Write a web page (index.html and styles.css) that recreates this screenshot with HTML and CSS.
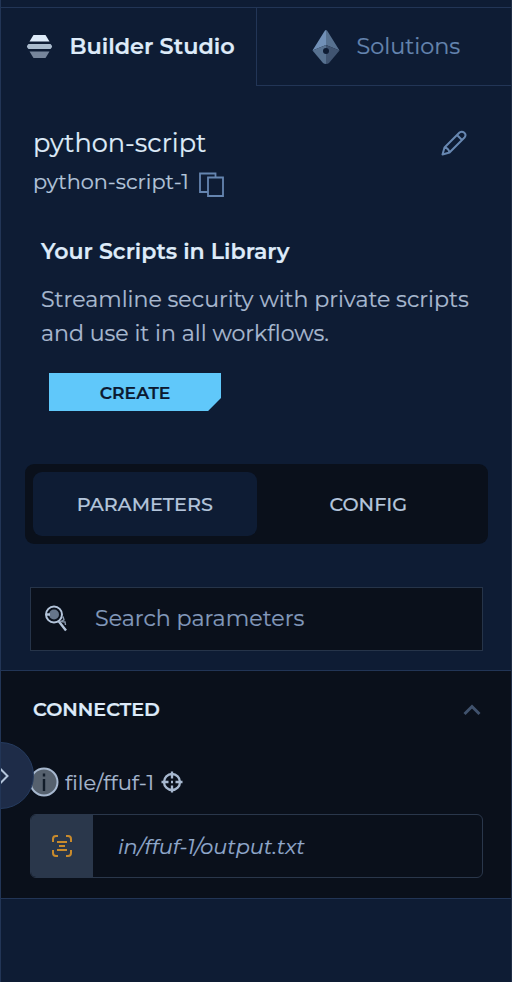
FILE: index.html
```html
<!DOCTYPE html>
<html lang="en">
<head>
<meta charset="utf-8">
<title>Builder Studio</title>
<link rel="stylesheet" href="styles.css">
</head>
<body>
<main class="panel">
  <nav class="tabs">
    <div class="tab tab-active">
      <svg width="28" height="26" viewBox="0 0 28 26"><path d="M7.500 1h12l4 6.500h-20z" fill="#deebf9"/><path d="M2.500 10h22q3 2.500 0 5h-22q-3-2.500 0-5z" fill="#aabbcd"/><path d="M3.500 17.500h20l-4 6.500h-12z" fill="#76859b"/></svg>
      <span class="t-builder">Builder Studio</span>
    </div>
    <div class="tab tab-idle">
      <svg width="28" height="36" viewBox="0 0 28 36"><path d="M14 1q-1 0-2 2L.500 21.500 14 16z" fill="#7190b7"/><path d="M14 1q1 0 2 2l11.500 18.500L14 16z" fill="#577190"/><path d="M.500 21.500 14 16v19q-2 0-3-1z" fill="#577190"/><path d="M27.500 21.500 14 16v19q2 0 3-1z" fill="#405471"/><circle cx="14" cy="22" r="3" fill="#0e1c34"/></svg>
      <span class="t-solutions">Solutions</span>
    </div>
  </nav>
  <header class="head">
    <div class="row name-row">
      <span class="t-name">python-script</span>
      <svg width="26" height="26" viewBox="0 0 26 26" fill="none" stroke="#6787b1" stroke-width="2" stroke-linejoin="round"><path d="M1.500 24.500 3.500 17.500 18.500 2.500q2.500-1.800 4.800.300t.200 4.700L8.500 22.500zM16 5l5 5M3.500 17.500q4 .500 5 5"/></svg>
    </div>
    <div class="row id-row">
      <span class="t-id">python-script-1</span>
      <svg class="copy-icon" width="26" height="26" viewBox="0 0 26 26" fill="none" stroke="#6585b0" stroke-width="1.800"><path d="M9 20H1V1.500h15.500V5M9 5.500h15V24H9z"/></svg>
    </div>
  </header>
  <section class="promo">
    <h2 class="t-title">Your Scripts in Library</h2>
    <p class="copy">Streamline security with private scripts<br>and use it in all workflows.</p>
    <button class="create">CREATE</button>
  </section>
  <div class="switch">
    <div class="seg seg-on">PARAMETERS</div>
    <div class="seg">CONFIG</div>
  </div>
  <div class="search">
    <svg width="24" height="28" viewBox="0 0 24 28" fill="none" stroke="#b4c5db"><circle cx="9" cy="9.500" r="8" stroke-width="2"/><circle cx="9" cy="9.500" r="5" fill="#66758a" stroke="none"/><path d="M1.500 9.500h3.500M13.500 16l7.500 9.500" stroke-width="2.400"/><path d="M18 11.500l1 3.500-3 1.500 4 .500.500 3" stroke="#8998ac" stroke-width="1.400"/></svg>
    <span class="t-search">Search parameters</span>
  </div>
  <section class="connected">
    <div class="row conn-head">
      <span class="t-conn">CONNECTED</span>
      <svg width="18" height="12" viewBox="0 0 18 12" fill="none" stroke="#40526d" stroke-width="3"><path d="M1.500 10 9 2.500l7.500 7.500"/></svg>
    </div>
    <div class="row file-row">
      <svg width="30" height="30" viewBox="0 0 30 30"><circle cx="15" cy="15" r="13.500" fill="#56616e" stroke="#a7b8cf" stroke-width="2"/><path d="M15 12v12M15 6.500v3" stroke="#111c29" stroke-width="2.400"/></svg>
      <span class="t-file">file/ffuf-1</span>
      <svg width="22" height="22" viewBox="0 0 22 22" fill="none" stroke="#a7b8cf" stroke-width="2.300"><circle cx="11" cy="11" r="8"/><path d="M11 .500V7.500M11 14.500v7M.500 11H7.500M14.500 11h7M10 11h2"/></svg>
    </div>
    <div class="field">
      <div class="field-icon"><svg width="22" height="24" viewBox="0 0 22 24" fill="none" stroke="#c88a2c" stroke-width="2"><path d="M2 8V5q0-3 3-3h2M15 2h2q3 0 3 3v3M2 16v3q0 3 3 3h2M15 22h2q3 0 3-3v-3M6 8h10M6 16h10M8 12h6"/></svg></div>
      <span>in/ffuf-1/output.txt</span>
    </div>
  </section>
  <div class="drawer"><svg width="12" height="20" viewBox="0 0 12 20" fill="none" stroke="#b4c5db" stroke-width="2"><path d="M0 1.500 8.500 10 0 18.500"/></svg></div>
</main>
</body>
</html>
```
FILE: styles.css
```css
* { box-sizing: border-box; }
body { margin: 0; background: #0e1c34; font-family: Montserrat, Inter, "Liberation Sans", sans-serif; -webkit-text-stroke: .2px currentColor; }
svg { display: block; flex: none; }
.panel { position: relative; height: 982px; padding-top: 7px; border-left: 1px solid #223556; border-right: 1px solid #202e47; overflow: hidden; white-space: nowrap; }
.tabs { display: flex; height: 79px; border-top: 1px solid #223556; }
.tab { display: flex; align-items: center; }
.tab-active { width: 255px; padding-left: 24.5px; gap: 16px; }
.tab-idle { flex: 1; padding-left: 55px; gap: 16.5px; border-left: 1px solid #223556; border-bottom: 1px solid #223556; }
.row { display: flex; align-items: center; }
.head { padding: 41px 44px 0 32px; }
.name-row { justify-content: space-between; height: 32px; }
.id-row { height: 44px; gap: 10px; }
.copy-icon { margin-top: 7px; }
.promo { padding: 34px 0 0 40px; }
h2, p { margin: 0; }
.t-builder { margin-bottom: 2px; font-size: 22.4px; font-weight: 600; color: #deebf9; }
.t-solutions { margin-bottom: 2px; font-size: 22.3px; color: #6585b0; }
.t-name { margin-bottom: 2px; font-size: 25.6px; color: #deebf9; }
.t-id { font-size: 20.8px; color: #b4c5db; }
.t-title { font-size: 22.1px; line-height: 30px; font-weight: 600; color: #deebf9; }
.copy { margin-top: 16px; font-size: 22.1px; line-height: 34px; color: #a9b9d0; }
.create { display: block; width: 172px; height: 38px; margin: 22px 0 0 8px; padding: 0; border: 0; background: #60c8fa; clip-path: polygon(0 0, 100% 0, 100% 66%, 92.500% 100%, 0 100%); font: 600 17.2px Montserrat, Inter, sans-serif; color: #0c1930; }
.switch { display: flex; width: 463px; height: 80px; margin: 53px 0 0 24px; padding: 8px; border-radius: 9px; background: #0a101b; }
.seg { flex: 1; display: flex; align-items: center; justify-content: center; border-radius: 9px; font-size: 19.2px; font-weight: 500; color: #b4c5db; }
.seg-on { background: #0e1c34; }
.search { display: flex; align-items: center; width: 453px; height: 64px; margin: 43px 0 0 29px; padding-left: 14px; gap: 26px; border: 1px solid #263449; background: #0a101b; font-size: 22.2px; color: #8399bb; }
.t-search { margin-bottom: 2px; }
.connected { height: 229px; margin-top: 19px; border: solid #223556; border-width: 1px 0; background: #0a101b; }
.conn-head { justify-content: space-between; height: 77px; padding: 0 30px 0 32px; }
.t-conn { margin-bottom: 2px; font-size: 19.2px; font-weight: 600; color: #deebf9; }
.file-row { height: 66px; padding: 2px 0 0 28px; gap: 6px; font-size: 21.1px; color: #a7b8cf; }
.t-file { margin-right: 1px; }
.field { display: flex; align-items: center; width: 453px; height: 64px; margin-left: 29px; border: 1px solid #2a374b; border-radius: 6px; overflow: hidden; font-size: 20.8px; font-style: italic; color: #91a9cc; }
.field-icon { display: flex; align-items: center; justify-content: center; width: 62px; height: 62px; margin-right: 25px; background: #2a374b; }
.drawer { position: absolute; left: -34px; top: 742px; width: 67px; height: 67px; border: 1px solid #263c60; border-radius: 50%; background: #1e2c48; display: flex; align-items: center; padding-left: 31px; }
```
